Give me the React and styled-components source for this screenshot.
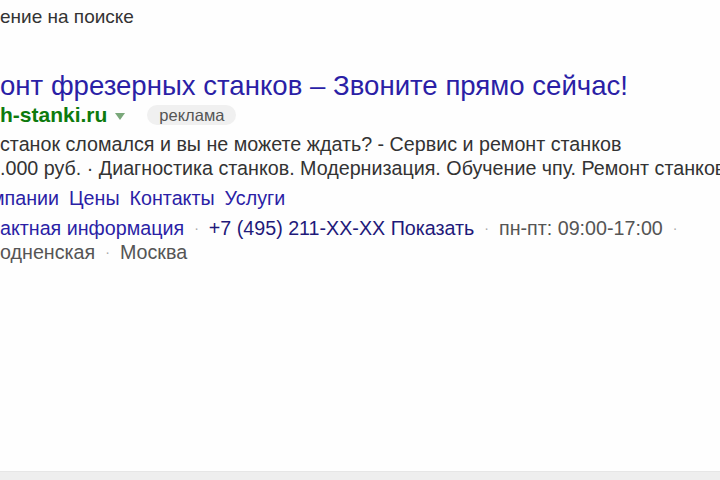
import React from 'react';
import styled, { createGlobalStyle } from 'styled-components';

const GlobalStyle = createGlobalStyle`
  html, body {
    margin: 0;
    padding: 0;
    background: #ffffff;
  }
  body {
    font-family: "Liberation Sans", Arial, sans-serif;
    overflow: hidden;
  }
`;

const Page = styled.div`
  width: 720px;
  height: 480px;
  display: flex;
  flex-direction: column;
  overflow: hidden;
  background: #fefefe;
`;

const Caption = styled.div`
  height: 34px;
  display: flex;
  align-items: center;
  font-size: 19px;
  color: #333;
  white-space: nowrap;
`;

const Ad = styled.div`
  flex: 1;
  display: flex;
  flex-direction: column;
  padding-top: 36px;
  white-space: nowrap;
  overflow: hidden;
`;

const Title = styled.a`
  font-size: 27.6px;
  line-height: 32px;
  color: #2b1fa6;
  text-decoration: none;
`;

const UrlRow = styled.div`
  display: flex;
  align-items: center;
  height: 26px;
`;

const Url = styled.span`
  font-size: 21px;
  font-weight: bold;
  color: #0d7a0d;
`;

const Arrow = styled.span`
  width: 0;
  height: 0;
  margin: 3px 0 0 8px;
  border-left: 5px solid transparent;
  border-right: 5px solid transparent;
  border-top: 7px solid #7aa87a;
`;

const Badge = styled.span`
  margin-left: 22px;
  padding: 0 12px;
  height: 20px;
  display: flex;
  align-items: center;
  border-radius: 10px;
  background: #f0f0f0;
  color: #555;
  font-size: 16.5px;
`;

const Text = styled.div`
  font-size: 19.7px;
  line-height: 24px;
  color: #333;
  margin-top: ${p => p.first ? '4px' : '0'};
`;

const Links = styled.div`
  display: flex;
  gap: 10px;
  margin: 6px 0 0 -9px;
  font-size: 19.7px;
  line-height: 24px;
`;

const Link = styled.a`
  color: ${p => p.dark ? '#1f1a7a' : '#2b1fa6'};
  text-decoration: none;
`;

const Contacts = styled.div`
  display: flex;
  align-items: center;
  margin-top: ${p => p.first ? '6px' : '0'};
  font-size: 19.7px;
  line-height: 24px;
`;

const Item = styled.span`
  color: ${p => p.muted ? '#555' : p.link ? '#2b1fa6' : '#333'};
`;

const Dot = styled.span`
  margin: 0 10px;
  color: #aaa;
  font-size: 14px;
`;

const Footer = styled.div`
  height: 8px;
  background: #eeeeee;
  border-top: 1px solid #e6e6e6;
`;

export default function App() {
  return (
    <Page>
      <GlobalStyle />
      <Caption>ение на поиске</Caption>
      <Ad>
        <Title href="#">онт фрезерных станков – Звоните прямо сейчас!</Title>
        <UrlRow>
          <Url>h-stanki.ru</Url>
          <Arrow />
          <Badge>реклама</Badge>
        </UrlRow>
        <Text first>станок сломался и вы не можете ждать? - Сервис и ремонт станков</Text>
        <Text>.000 руб. · Диагностика станков. Модернизация. Обучение чпу. Ремонт станков</Text>
        <Links>
          <Link href="#">мпании</Link>
          <Link href="#">Цены</Link>
          <Link href="#">Контакты</Link>
          <Link href="#">Услуги</Link>
        </Links>
        <Contacts first>
          <Item link>актная информация</Item>
          <Dot>·</Dot>
          <Link dark href="#">+7 (495) 211-XX-XX Показать</Link>
          <Dot>·</Dot>
          <Item muted>пн-пт: 09:00-17:00</Item>
          <Dot>·</Dot>
        </Contacts>
        <Contacts>
          <Item muted>одненская</Item>
          <Dot>·</Dot>
          <Item muted>Москва</Item>
        </Contacts>
      </Ad>
      <Footer />
    </Page>
  );
}
